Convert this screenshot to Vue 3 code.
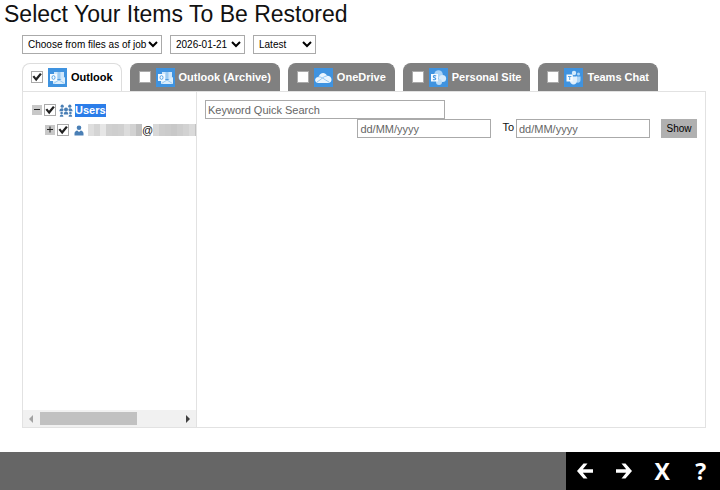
<template>
  <div class="restore-page">
    <h1 class="page-title">Select Your Items To Be Restored</h1>

    <main class="content">
      <div class="job-filter">
        <div v-for="item in filters" :key="item.id" class="select-box" :class="'select-' + item.id">
          <select v-model="item.value" :aria-label="item.label">
            <option>{{ item.value }}</option>
          </select>
          <svg viewBox="0 0 10 7" aria-hidden="true"><path d="M1 1l4 4 4-4" /></svg>
        </div>
      </div>

      <div class="tabs">
        <div
          v-for="tab in tabs"
          :key="tab.id"
          class="tab"
          :class="{ active: tab.id === activeTab }"
          @click="activeTab = tab.id"
        >
          <input :id="'tab-' + tab.id" v-model="tab.checked" type="checkbox" class="check" />
          <svg class="tab-icon" viewBox="0 0 19 19" aria-hidden="true" v-html="icons[tab.icon]"></svg>
          <label :for="'tab-' + tab.id">{{ tab.name }}</label>
        </div>
      </div>

      <div class="panel">
        <aside class="tree-pane">
          <div class="tree">
            <div class="tree-row">
              <button type="button" class="toggle" aria-label="Collapse">
                <svg viewBox="0 0 10 10"><path d="M2 4.500h6" /></svg>
              </button>
              <input id="node-users" v-model="usersChecked" type="checkbox" class="check" />
              <svg class="users-icon" viewBox="0 0 14 13" aria-hidden="true">
                <g fill="#4a7fb5">
                  <circle cx="3.2" cy="2.2" r="1.6" />
                  <circle cx="10.8" cy="2.2" r="1.6" />
                  <circle cx="7" cy="5.4" r="2" />
                  <path d="M.4 7.200c0-3.600 3.600-3.600 4.200-1.800L4 7.200zM13.600 7.200c0-3.600-3.600-3.600-4.200-1.800l.6 1.800z" />
                  <circle cx="2.6" cy="9" r="1.300" />
                  <circle cx="11.400" cy="9" r="1.300" />
                  <path d="M4.800 10.500V9.500c0-2.400 4.400-2.400 4.400 0v1zM.8 12.800c0-3 3.600-3 3.600 0zM9.600 12.800c0-3 3.600-3 3.600 0z" />
                </g>
              </svg>
              <label for="node-users" class="selected">Users</label>
            </div>
            <div class="tree-row child">
              <button type="button" class="toggle" aria-label="Expand">
                <svg viewBox="0 0 10 10"><path d="M2 4.500h6M5 1.500v6" /></svg>
              </button>
              <input id="node-user" v-model="userChecked" type="checkbox" class="check" />
              <svg class="user-icon" viewBox="0 0 10 11" aria-hidden="true">
                <circle cx="5" cy="2.800" r="2.300" fill="#4a7fb5" />
                <path d="M.5 10.500V8.600C.5 6.800 2 5.800 3.200 5.600L5 7l1.800-1.400C8 5.800 9.500 6.800 9.500 8.600v1.900z" fill="#4a7fb5" />
              </svg>
              <label for="node-user" class="account">
                <span class="mask"><i v-for="(c, i) in maskBefore" :key="i" :style="{ background: c }"></i></span>@<span class="mask"><i v-for="(c, i) in maskAfter" :key="i" :style="{ background: c }"></i></span>
              </label>
            </div>
          </div>
          <div class="scrollbar">
            <button type="button" aria-label="Scroll left">
              <svg viewBox="0 0 17 17"><path d="M10 5v8L6 9z" fill="#a3a3a3" /></svg>
            </button>
            <div class="track"><div class="thumb"></div></div>
            <button type="button" aria-label="Scroll right">
              <svg viewBox="0 0 17 17"><path d="M7 5v8l4-4z" fill="#404040" /></svg>
            </button>
          </div>
        </aside>

        <section class="list-pane">
          <input v-model="keyword" type="text" class="field keyword" placeholder="Keyword Quick Search" aria-label="Keyword Quick Search" />
          <div class="date-range">
            <input v-model="dateFrom" type="text" class="field" placeholder="dd/MM/yyyy" aria-label="From" />
            <label for="date-to">To</label>
            <input id="date-to" v-model="dateTo" type="text" class="field" placeholder="dd/MM/yyyy" />
            <button type="button" class="show-btn">Show</button>
          </div>
        </section>
      </div>
    </main>

    <footer class="footer">
      <nav class="footer-nav">
        <button type="button" aria-label="Previous">
          <svg viewBox="0 0 16 16"><path d="M0 8l6.500-7.500h4L5.800 6.300H16v3.400H5.800l4.700 5.800h-4z" /></svg>
        </button>
        <button type="button" aria-label="Next">
          <svg viewBox="0 0 16 16"><path d="M16 8L9.500.5h-4l4.700 5.800H0v3.400h10.200l-4.700 5.800h4z" /></svg>
        </button>
        <button type="button" aria-label="Close">X</button>
        <button type="button" aria-label="Help">?</button>
      </nav>
    </footer>
  </div>
</template>

<script setup>
import { ref } from 'vue'

const filters = ref([
  { id: 'mode', label: 'Restore mode', value: 'Choose from files as of job' },
  { id: 'date', label: 'Job date', value: '2026-01-21' },
  { id: 'time', label: 'Job time', value: 'Latest' }
])

const activeTab = ref('outlook')
const tabs = ref([
  { id: 'outlook', name: 'Outlook', icon: 'outlook', checked: true },
  { id: 'archive', name: 'Outlook (Archive)', icon: 'outlook', checked: false },
  { id: 'onedrive', name: 'OneDrive', icon: 'onedrive', checked: false },
  { id: 'site', name: 'Personal Site', icon: 'sharepoint', checked: false },
  { id: 'teams', name: 'Teams Chat', icon: 'teams', checked: false }
])

const usersChecked = ref(true)
const userChecked = ref(true)
const keyword = ref('')
const dateFrom = ref('')
const dateTo = ref('')

// account name is masked, one colour per block
const maskBefore = ['#dedede', '#d4d4d4', '#e6e6e6', '#d0d0d0', '#cecece', '#d0d0d0', '#dcdcdc', '#d2d2d2', '#c0c0c0']
const maskAfter = ['#d8d8d8', '#cdcdcd', '#cbcbcb', '#c8c8c8', '#cdcdcd', '#d2d2d2', '#dadada', '#c2c2c2']

const icons = {
  outlook:
    '<path fill="#3f93e0" d="M0 0h19v19H0z"/><path fill="#cfe7fb" d="M6 4h10v7H6z"/><path fill="#9bcbf3" d="M9.500 4h3v7h-3z"/><path fill="#dceefc" d="M5 9l6 3.500L17 9v7H5z"/><path stroke="#9bcbf3" fill="none" d="M5.500 15.500L11 12l5.500 3.500"/><path fill="#f4faff" d="M2 6h7v7H2z"/><ellipse cx="5.500" cy="9.500" rx="1.500" ry="1.900" fill="none" stroke="#5aa5e6"/>',
  onedrive:
    '<path fill="#3f93e0" d="M0 0h19v19H0z"/><path fill="#eaf5fe" d="M4.500 15c-4.500-.2-4.500-5.800 0-6C6 4.500 11 3.500 13 7.800c5.500-.2 6 7 1.500 7.200z"/><path fill="none" stroke="#8cc3f1" stroke-width=".9" d="M4.500 9c3-.5 5 2 10.500 5M13 7.800C9 8.500 8 11 3 14"/>',
  sharepoint:
    '<path fill="#3f93e0" d="M0 0h19v19H0z"/><circle cx="9.500" cy="6.500" r="4.300" fill="#a9d3f7"/><circle cx="13.500" cy="10.500" r="3.600" fill="#d6ebfc"/><circle cx="10" cy="14" r="3" fill="#bcdcf8"/><path fill="#f5faff" d="M2 6h7v7.500H2z"/><path d="M7.200 8c-3.400-1.200-3.400 1.200-1.600 1.700s1.600 2.700-1.700 1.800" fill="none" stroke="#3f93e0" stroke-width="1.100"/>',
  teams:
    '<path fill="#3f93e0" d="M0 0h19v19H0z"/><circle cx="10" cy="5" r="2.200" fill="#d3eafc"/><circle cx="14.500" cy="6" r="1.500" fill="#acd5f7"/><path fill="#acd5f7" d="M12 8.500h4.500V12c0 3-3.500 3.500-4.500 1.500z"/><path fill="#e0f0fd" d="M6 8.500h7V13c0 4.500-7 4.500-7 0z"/><path fill="#f8fcff" d="M2.500 6.500h6.300v7H2.500z"/><path fill="none" stroke="#5aa5e6" d="M4 8.500h3.400M5.700 8.500v3.500"/>'
}
</script>

<style>
body {
  margin: 0;
  background: #fff;
}
</style>

<style scoped>
.restore-page {
  display: flex;
  flex-direction: column;
  min-height: 100vh;
  font-family: "Liberation Sans", Arial, sans-serif;
  font-size: 11px;
  color: #111;
}

.restore-page * {
  box-sizing: border-box;
}

button,
select,
input {
  margin: 0;
  font-family: inherit;
  font-size: inherit;
}

.page-title {
  margin: 0 4px;
  font-size: 23px;
  line-height: 28px;
  font-weight: 400;
}

.content {
  flex: 1;
  display: flex;
  flex-direction: column;
  padding: 7px 14px 24px 22px;
}

.job-filter {
  display: flex;
  gap: 8px;
}

.select-box {
  position: relative;
}

.select-box select {
  appearance: none;
  display: block;
  width: 100%;
  height: 19px;
  padding: 0 0 0 5px;
  border: 1px solid #aaa;
  border-radius: 0;
  background: #fff;
  color: #000;
  font-size: 10px;
}

.select-box svg {
  position: absolute;
  top: 6px;
  right: 4px;
  width: 10px;
  height: 7px;
  fill: none;
  stroke: #000;
  stroke-width: 2;
  pointer-events: none;
}

.select-mode {
  width: 140px;
}

.select-date {
  width: 75px;
}

.select-time {
  width: 63px;
}

.tabs {
  display: flex;
  gap: 8px;
  margin-top: 9px;
}

.tab {
  display: flex;
  align-items: center;
  height: 28px;
  padding: 0 8px 1px;
  border: 1px solid #808080;
  border-bottom: 0;
  border-radius: 8px 8px 0 0;
  background: #808080;
  color: #fff;
  font-weight: 700;
  white-space: nowrap;
}

.tab.active {
  border-color: #ddd;
  background: #fff;
  color: #000;
}

.check {
  appearance: none;
  flex-shrink: 0;
  display: grid;
  place-items: center;
  width: 12px;
  height: 12px;
  border: 1px solid #aaa;
  background: #fff;
}

.check:checked::after {
  content: '';
  width: 10px;
  height: 10px;
  background: #222;
  clip-path: polygon(5% 48%, 22% 36%, 40% 58%, 80% 10%, 98% 22%, 42% 92%);
}

.tab-icon {
  width: 19px;
  height: 19px;
  margin: 0 4px 0 5px;
}

.panel {
  flex: 1;
  display: flex;
  border: 1px solid #e2e2e2;
}

.tree-pane {
  flex: none;
  display: flex;
  flex-direction: column;
  width: 174px;
  border-right: 1px solid #e2e2e2;
  overflow: hidden;
}

.tree {
  flex: 1;
  padding: 8px 0 0 9px;
}

.tree-row {
  display: flex;
  align-items: center;
  height: 20px;
}

.tree-row.child {
  padding-left: 13px;
}

.toggle {
  flex-shrink: 0;
  width: 10px;
  height: 10px;
  margin-right: 2px;
  padding: 0;
  border: 0;
  background: #c8c8c8;
}

.toggle svg {
  display: block;
  stroke: #222;
  stroke-width: 1;
}

.users-icon {
  flex-shrink: 0;
  width: 14px;
  height: 13px;
  margin: 0 2px 0 3px;
}

.user-icon {
  flex-shrink: 0;
  width: 10px;
  height: 11px;
  margin: 0 4px 0 5px;
}

.selected {
  background: #2b7de9;
  color: #fff;
  font-weight: 700;
  line-height: 13px;
}

.account {
  display: flex;
  align-items: center;
}

.mask {
  display: flex;
}

.mask i {
  width: 6px;
  height: 12px;
}

.scrollbar {
  display: flex;
  height: 17px;
  background: #f1f1f1;
}

.scrollbar button {
  width: 17px;
  height: 17px;
  padding: 0;
  border: 0;
  background: none;
}

.scrollbar svg {
  display: block;
}

.track {
  flex: 1;
  padding: 2px 0;
}

.thumb {
  width: 70%;
  height: 100%;
  background: #c1c1c1;
}

.list-pane {
  flex: 1;
  padding: 8px;
}

.field {
  display: block;
  width: 134px;
  height: 19px;
  padding: 0 2px;
  border: 1px solid #aaa;
  background: #fff;
}

.field::placeholder {
  color: #666;
}

.keyword {
  width: 240px;
}

.date-range {
  display: flex;
  justify-content: flex-end;
}

.date-range label {
  margin: 0 2px 0 11px;
  line-height: 17px;
}

.show-btn {
  width: 36px;
  height: 19px;
  margin-left: 11px;
  padding: 0;
  border: 0;
  background: #b0b0b0;
  color: #000;
  font-size: 10px;
}

.footer {
  display: flex;
  justify-content: flex-end;
  height: 38px;
  background: #666;
}

.footer-nav {
  display: grid;
  grid-template-columns: repeat(4, 1fr);
  width: 154px;
  background: #000;
}

.footer-nav button {
  display: flex;
  align-items: center;
  justify-content: center;
  padding: 0;
  border: 0;
  background: none;
  color: #fff;
  font-family: "Open Sans", sans-serif;
  font-size: 23px;
  line-height: 38px;
  font-weight: 700;
}

.footer-nav svg {
  width: 16px;
  height: 16px;
  fill: #fff;
}
</style>
